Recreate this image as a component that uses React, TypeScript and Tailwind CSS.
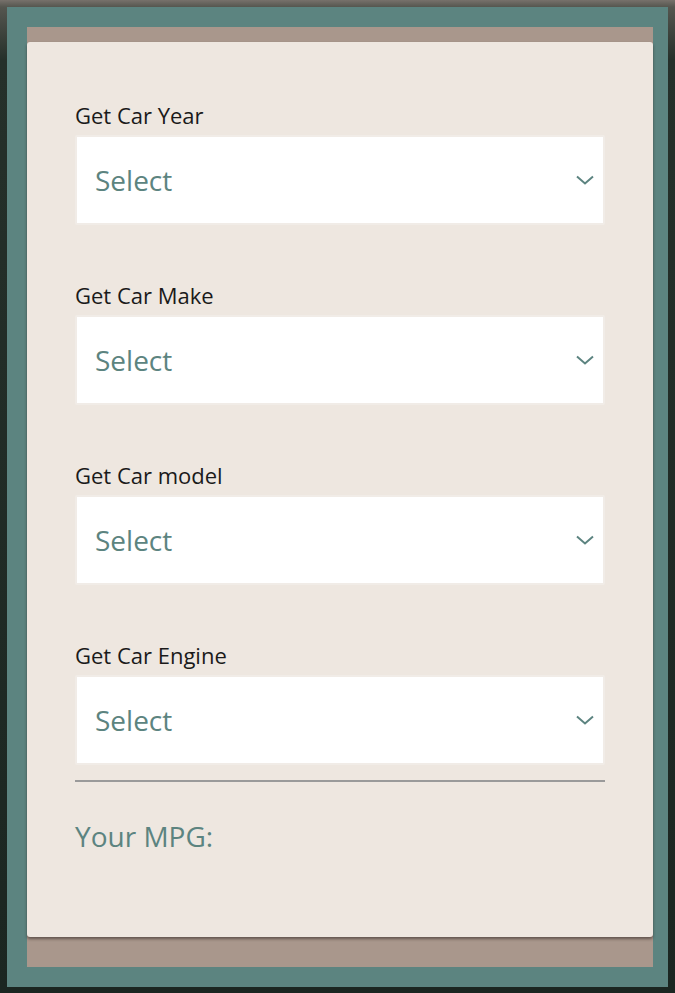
import React from 'react';

const fields = ['Get Car Year', 'Get Car Make', 'Get Car model', 'Get Car Engine'];

const Chevron: React.FC = () => (
  <svg width="18" height="10" viewBox="0 0 18 10" fill="none" className="shrink-0">
    <path d="M1 1.5 L9 8.5 L17 1.5" stroke="#5c8480" strokeWidth="2" />
  </svg>
);

const App: React.FC = () => {
  return (
    <div
      className="min-h-[993px] p-[7px] pb-[6px] bg-[linear-gradient(180deg,#77716b_0px,#55564f_7px,#25302a_60px,#1b2621_100%)]"
      style={{ fontFamily: '"Open Sans", "Noto Sans", sans-serif' }}
    >
      <div className="bg-[#5c8480] pt-[20px] pb-[20px] pl-[20px] pr-[15px] h-[980px]">
        <div className="bg-[#a9978c] pt-[15px] h-[940px]">
          <div className="bg-[#eee7e0] rounded-[3px] h-[895px] px-[48px] pt-[57px] shadow-[0_2px_3px_rgba(40,30,25,0.55)]">
            {fields.map((label, i) => (
              <div key={label} className={i > 0 ? 'mt-[54px]' : ''}>
                <div className="text-[22px] leading-[32px] text-[#1a1a1a] mb-[4px]">{label}</div>
                <div className="h-[90px] bg-white border-2 border-[#f1ece7] rounded-[2px] flex items-center justify-between pl-[18px] pr-[9px]">
                  <span className="text-[28px] text-[#5c8480] leading-none">Select</span>
                  <Chevron />
                </div>
              </div>
            ))}
            <div className="mt-[15px] border-t-2 border-[#9a9a9a]" />
            <div className="mt-[37px] text-[28px] leading-[34px] text-[#5c8480]">Your MPG:</div>
          </div>
        </div>
      </div>
    </div>
  );
};

export default App;
